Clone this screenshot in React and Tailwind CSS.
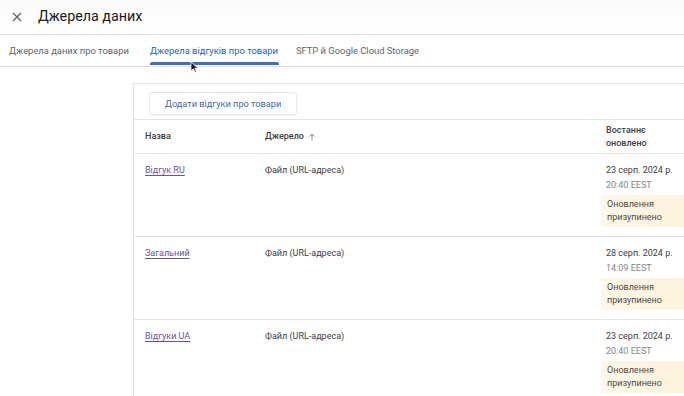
import React from 'react';

const rows = [
    { name: 'Відгук RU', date: '23 серп. 2024 р.', time: '20:40 EEST' },
    { name: 'Загальний', date: '28 серп. 2024 р.', time: '14:09 EEST' },
    { name: 'Відгуки UA', date: '23 серп. 2024 р.', time: '20:40 EEST' },
];

const Row = ({ row }) => (
    <div className="flex h-[83px] border-b border-[#e3e3e3] pt-[9px] text-[9px] text-[#3c4043]">
        <div className="w-[131px] pl-[11px] leading-[15px]">
            <span className="text-[#6b4fa3] underline underline-offset-2">{row.name}</span>
        </div>
        <div className="w-[341px] leading-[15px]">Файл (URL-адреса)</div>
        <div className="flex-1">
            <div className="leading-[15px]">{row.date}</div>
            <div className="leading-[15px] text-[#80868b]">{row.time}</div>
            <div className="mt-[2px] -ml-[5px] bg-gradient-to-r from-[#fdf7e6] to-[#fcf3dc] px-[6px] py-[3px] leading-[13px] text-[#4d4a42]">
                <div>Оновлення</div>
                <div>призупинено</div>
            </div>
        </div>
    </div>
);

const App = () => {
    return (
        <div className="relative h-[396px] w-[684px] overflow-hidden bg-white font-['Roboto',sans-serif]">
            <div className="flex h-[35px] items-center border-b border-[#e3e3e3] bg-gradient-to-b from-[#fafafa] to-white">
                <svg className="ml-[12px] h-[10px] w-[10px]" viewBox="0 0 10 10">
                    <path d="M1 1 L9 9 M9 1 L1 9" stroke="#5f6368" strokeWidth="1.3" />
                </svg>
                <div className="ml-[16px] -mt-[1px] text-[14.3px] text-[#202124]">Джерела даних</div>
            </div>

            <div className="flex h-[32px] border-b border-[#dadce0] pt-[1px] text-[9.4px]">
                <div className="flex items-center pl-[9px] text-[#5f6368]">Джерела даних про товари</div>
                <div className="relative ml-[20px] flex items-center px-[1px] text-[#1f5fb0]">
                    Джерела відгуків про товари
                    <div className="absolute bottom-[1px] left-[1px] right-[0px] h-[3px] rounded-t-[2px] bg-[#3c6fc0]" />
                </div>
                <div className="ml-[17px] flex items-center text-[#5f6368]">SFTP й Google Cloud Storage</div>
            </div>

            <div className="flex pt-[16px]">
                <div className="w-[133px] shrink-0" />
                <div className="flex-1 border-l border-t border-[#e3e3e3] shadow-[0_0_3px_rgba(0,0,0,0.06)]">
                    <div className="h-[36px] border-b border-[#e3e3e3] pl-[15px] pt-[6px]">
                        <button className="h-[23px] rounded-[3px] border border-[#e6e8eb] bg-white px-[15px] text-[9.2px] text-[#4266b0] shadow-[0_1px_1px_rgba(0,0,0,0.04)]">
                            Додати відгуки про товари
                        </button>
                    </div>
                    <div className="flex h-[34px] items-center border-b border-[#e3e3e3] text-[9px] font-medium text-[#3c4043]">
                        <div className="w-[131px] pl-[11px]">Назва</div>
                        <div className="flex w-[341px] items-center gap-[4px]">
                            Джерело
                            <svg className="h-[8px] w-[8px]" viewBox="0 0 8 8">
                                <path d="M4 7.5 V1 M1.3 3.6 L4 1 L6.7 3.6" stroke="#80868b" strokeWidth="0.9" fill="none" />
                            </svg>
                        </div>
                        <div className="flex-1 leading-[13px]">
                            <div>Востаннє</div>
                            <div>оновлено</div>
                        </div>
                    </div>
                    {rows.map(row => (
                        <Row key={row.name} row={row} />
                    ))}
                </div>
            </div>

            <svg className="absolute left-[190px] top-[61px] h-[12px] w-[9px]" viewBox="0 0 9 12">
                <path d="M1 1 V10 L3.3 7.8 L5 11.3 L6.4 10.6 L4.8 7.2 H8 Z" fill="#111" stroke="#fff" strokeWidth="0.8" />
            </svg>
        </div>
    );
};

export default App;
